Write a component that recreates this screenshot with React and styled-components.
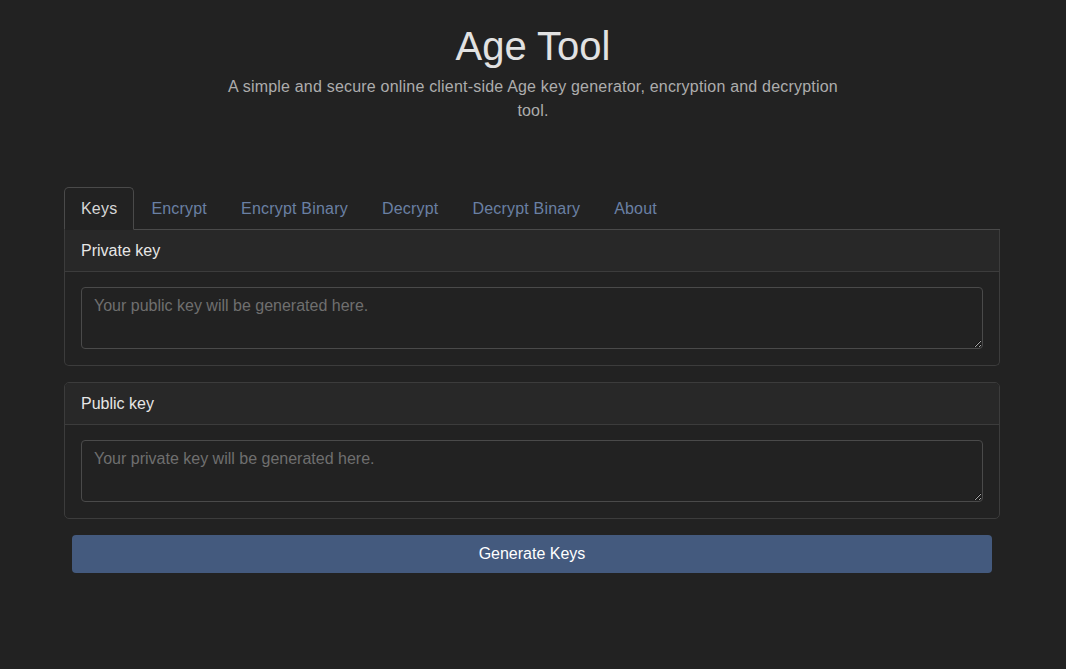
import React, { useState } from 'react';
import styled, { createGlobalStyle } from 'styled-components';

const tabs = [ 'Keys', 'Encrypt', 'Encrypt Binary', 'Decrypt', 'Decrypt Binary', 'About' ];

export default function App() {
  const [ active, setActive ] = useState('Keys');

  return (
    <Page>
      <GlobalStyle />
      <Header>
        <Title>Age Tool</Title>
        <Lead>A simple and secure online client-side Age key generator, encryption and decryption tool.</Lead>
      </Header>
      <Main>
        <TabList>
          { tabs.map(t => (
            <Tab key={ t } $active={ t === active } onClick={ () => setActive(t) }>{ t }</Tab>
          )) }
        </TabList>
        <TabPanel>
          <Card $first>
            <CardHeader>Private key</CardHeader>
            <CardBody>
              <KeyArea placeholder='Your public key will be generated here.' readOnly />
            </CardBody>
          </Card>
          <Card>
            <CardHeader>Public key</CardHeader>
            <CardBody>
              <KeyArea placeholder='Your private key will be generated here.' readOnly />
            </CardBody>
          </Card>
          <ButtonRow>
            <GenerateButton>Generate Keys</GenerateButton>
          </ButtonRow>
        </TabPanel>
      </Main>
    </Page>
  );
}

const GlobalStyle = createGlobalStyle`
  html, body {
    margin: 0;
    background: #222222;
    font-family: 'Liberation Sans', Arial, sans-serif;
  }
  * { box-sizing: border-box; }
`;

const Page = styled.div`
  min-height: 100vh;
  background: #222222;
  color: #dddddd;
  padding-top: 23px;
`;

const Header = styled.header`
  display: flex;
  flex-direction: column;
  align-items: center;
  text-align: center;
  margin-bottom: 64px;
`;

const Title = styled.h1`
  margin: 0 0 6px;
  font-size: 40px;
  font-weight: 300;
  line-height: 46px;
  color: #e2e2e2;
`;

const Lead = styled.p`
  margin: 0;
  width: 620px;
  font-size: 16px;
  line-height: 24px;
  letter-spacing: 0.2px;
  color: #adadad;
`;

const Main = styled.main`
  width: 936px;
  margin: 0 0 0 64px;
`;

const TabList = styled.nav`
  display: flex;
  border-bottom: 1px solid #4a4a4a;
`;

const Tab = styled.button`
  font-family: inherit;
  font-size: 16px;
  line-height: 25px;
  letter-spacing: 0.2px;
  padding: 8px 16px;
  margin-bottom: -1px;
  background: ${ p => p.$active ? '#222222' : 'transparent' };
  color: ${ p => p.$active ? '#d6d6d6' : '#6a80a4' };
  border: 1px solid ${ p => p.$active ? '#4a4a4a' : 'transparent' };
  border-bottom-color: ${ p => p.$active ? '#222222' : 'transparent' };
  border-radius: 5px 5px 0 0;
  cursor: pointer;
`;

const TabPanel = styled.section`
  display: flex;
  flex-direction: column;
  gap: 16px;
`;

const Card = styled.div`
  border: 1px solid #3c3c3c;
  border-top: ${ p => p.$first ? 'none' : '1px solid #3c3c3c' };
  border-radius: ${ p => p.$first ? '0 0 5px 5px' : '5px' };
  background: #222222;
  overflow: hidden;
`;

const CardHeader = styled.div`
  padding: 10px 16px 10px;
  font-size: 16px;
  line-height: 21px;
  margin-bottom: -1px;
  color: #e6e6e6;
  background: #282828;
  border-bottom: 1px solid #3c3c3c;
`;

const CardBody = styled.div`
  padding: 16px;
`;

const KeyArea = styled.textarea`
  display: block;
  width: 100%;
  height: 62px;
  padding: 6px 12px;
  font-family: inherit;
  font-size: 16px;
  line-height: 24px;
  color: #dddddd;
  background: #222222;
  border: 1px solid #4a4a4a;
  border-radius: 4px;
  resize: vertical;
  outline: none;

  &::placeholder {
    color: #6f6f6f;
  }
`;

const ButtonRow = styled.div`
  padding: 0 8px;
`;

const GenerateButton = styled.button`
  width: 100%;
  height: 38px;
  font-family: inherit;
  font-size: 16px;
  color: #ffffff;
  background: #445a7e;
  border: none;
  border-radius: 4px;
  cursor: pointer;
`;
